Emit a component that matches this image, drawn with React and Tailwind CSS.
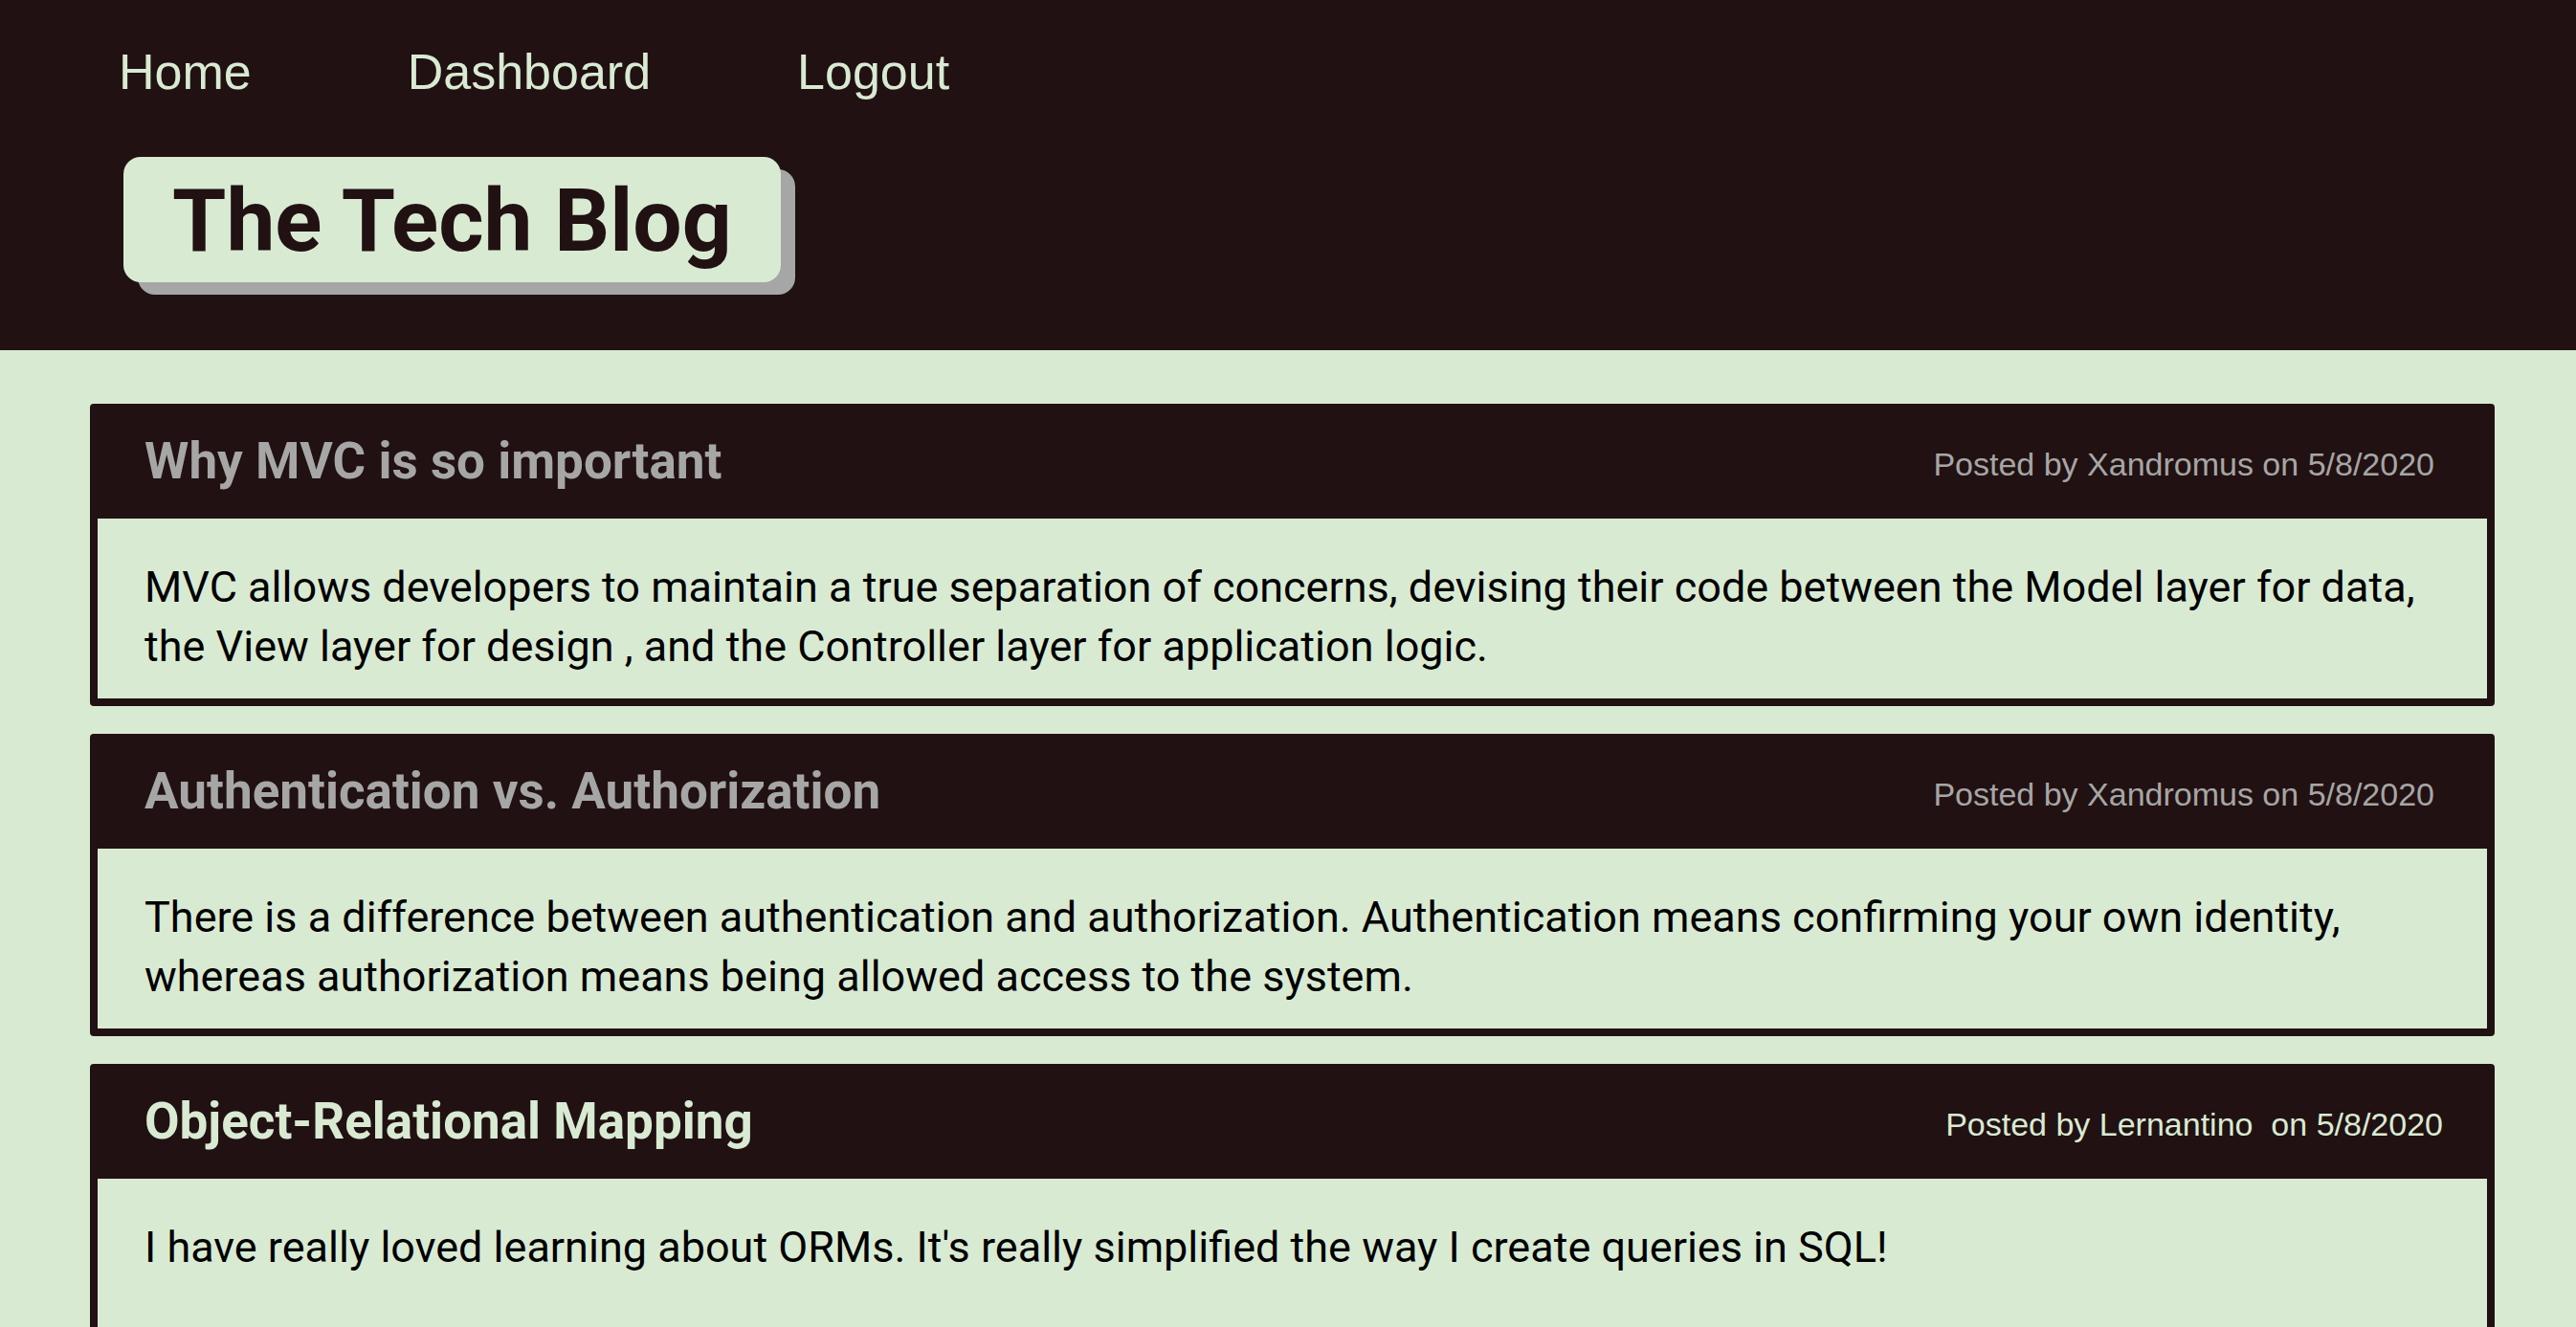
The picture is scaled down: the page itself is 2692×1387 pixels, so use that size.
import React from 'react';

const posts = [
  {
    title: 'Why MVC is so important',
    author: 'Xandromus',
    date: '5/8/2020',
    body: 'MVC allows developers to maintain a true separation of concerns, devising their code between the Model layer for data, the View layer for design , and the Controller layer for application logic.',
  },
  {
    title: 'Authentication vs. Authorization',
    author: 'Xandromus',
    date: '5/8/2020',
    body: 'There is a difference between authentication and authorization. Authentication means confirming your own identity, whereas authorization means being allowed access to the system.',
  },
  {
    title: 'Object-Relational Mapping',
    author: 'Lernantino ',
    date: '5/8/2020',
    body: "I have really loved learning about ORMs. It's really simplified the way I create queries in SQL!",
    active: true,
  },
];

const PostCard = ({ post }) => {
  const headColor = post.active ? 'text-[#d9ead3]' : 'text-[#a6a6a6]';

  return (
    <article className="bg-[#211112] rounded-[4px] px-[8px] pb-[8px]">
      <div className={`flex items-center justify-between h-[120px] pl-[49px] ${post.active ? 'pr-[46px]' : 'pr-[55px]'}`}>
        <h2 className={`font-['Roboto',sans-serif] font-bold text-[53px] leading-none ${headColor}`}>
          {post.title}
        </h2>
        <p className={`font-['Liberation_Sans',Arial,sans-serif] text-[34px] leading-none whitespace-pre pt-[6px] ${headColor}`}>
          Posted by {post.author} on {post.date}
        </p>
      </div>
      <div className="bg-[#d9ead3] min-h-[188px] pl-[49px] pr-[20px] pt-[41px] pb-[22px]">
        <p className="font-['Roboto',sans-serif] text-[45px] leading-[62px] text-black">{post.body}</p>
      </div>
    </article>
  );
};

export default function App() {
  return (
    <div className="min-h-screen bg-[#d9ead3]">
      {/* Top bar with nav and site title */}
      <header className="bg-[#211112] pt-[50px] pb-[71px]">
        <nav className="flex font-['Liberation_Sans',Arial,sans-serif] text-[52px] leading-[51px] text-[#d9ead3]">
          <a href="#" className="ml-[124px]">Home</a>
          <a href="#" className="ml-[163px]">Dashboard</a>
          <a href="#" className="ml-[153px]">Logout</a>
        </nav>
        <div className="mt-[63px] ml-[129px] inline-block bg-[#d9ead3] rounded-[18px] shadow-[15px_13px_0_#a6a6a6] px-[51px] pt-[22px] pb-[18px]">
          <h1 className="font-['Roboto',sans-serif] font-bold text-[91px] leading-[91px] text-[#211112]">
            The Tech Blog
          </h1>
        </div>
      </header>

      {/* Post list */}
      <main className="flex flex-col gap-[29px] pt-[56px] pl-[94px] pr-[85px] pb-[40px]">
        {posts.map((post) => (
          <PostCard key={post.title} post={post} />
        ))}
      </main>
    </div>
  );
}
